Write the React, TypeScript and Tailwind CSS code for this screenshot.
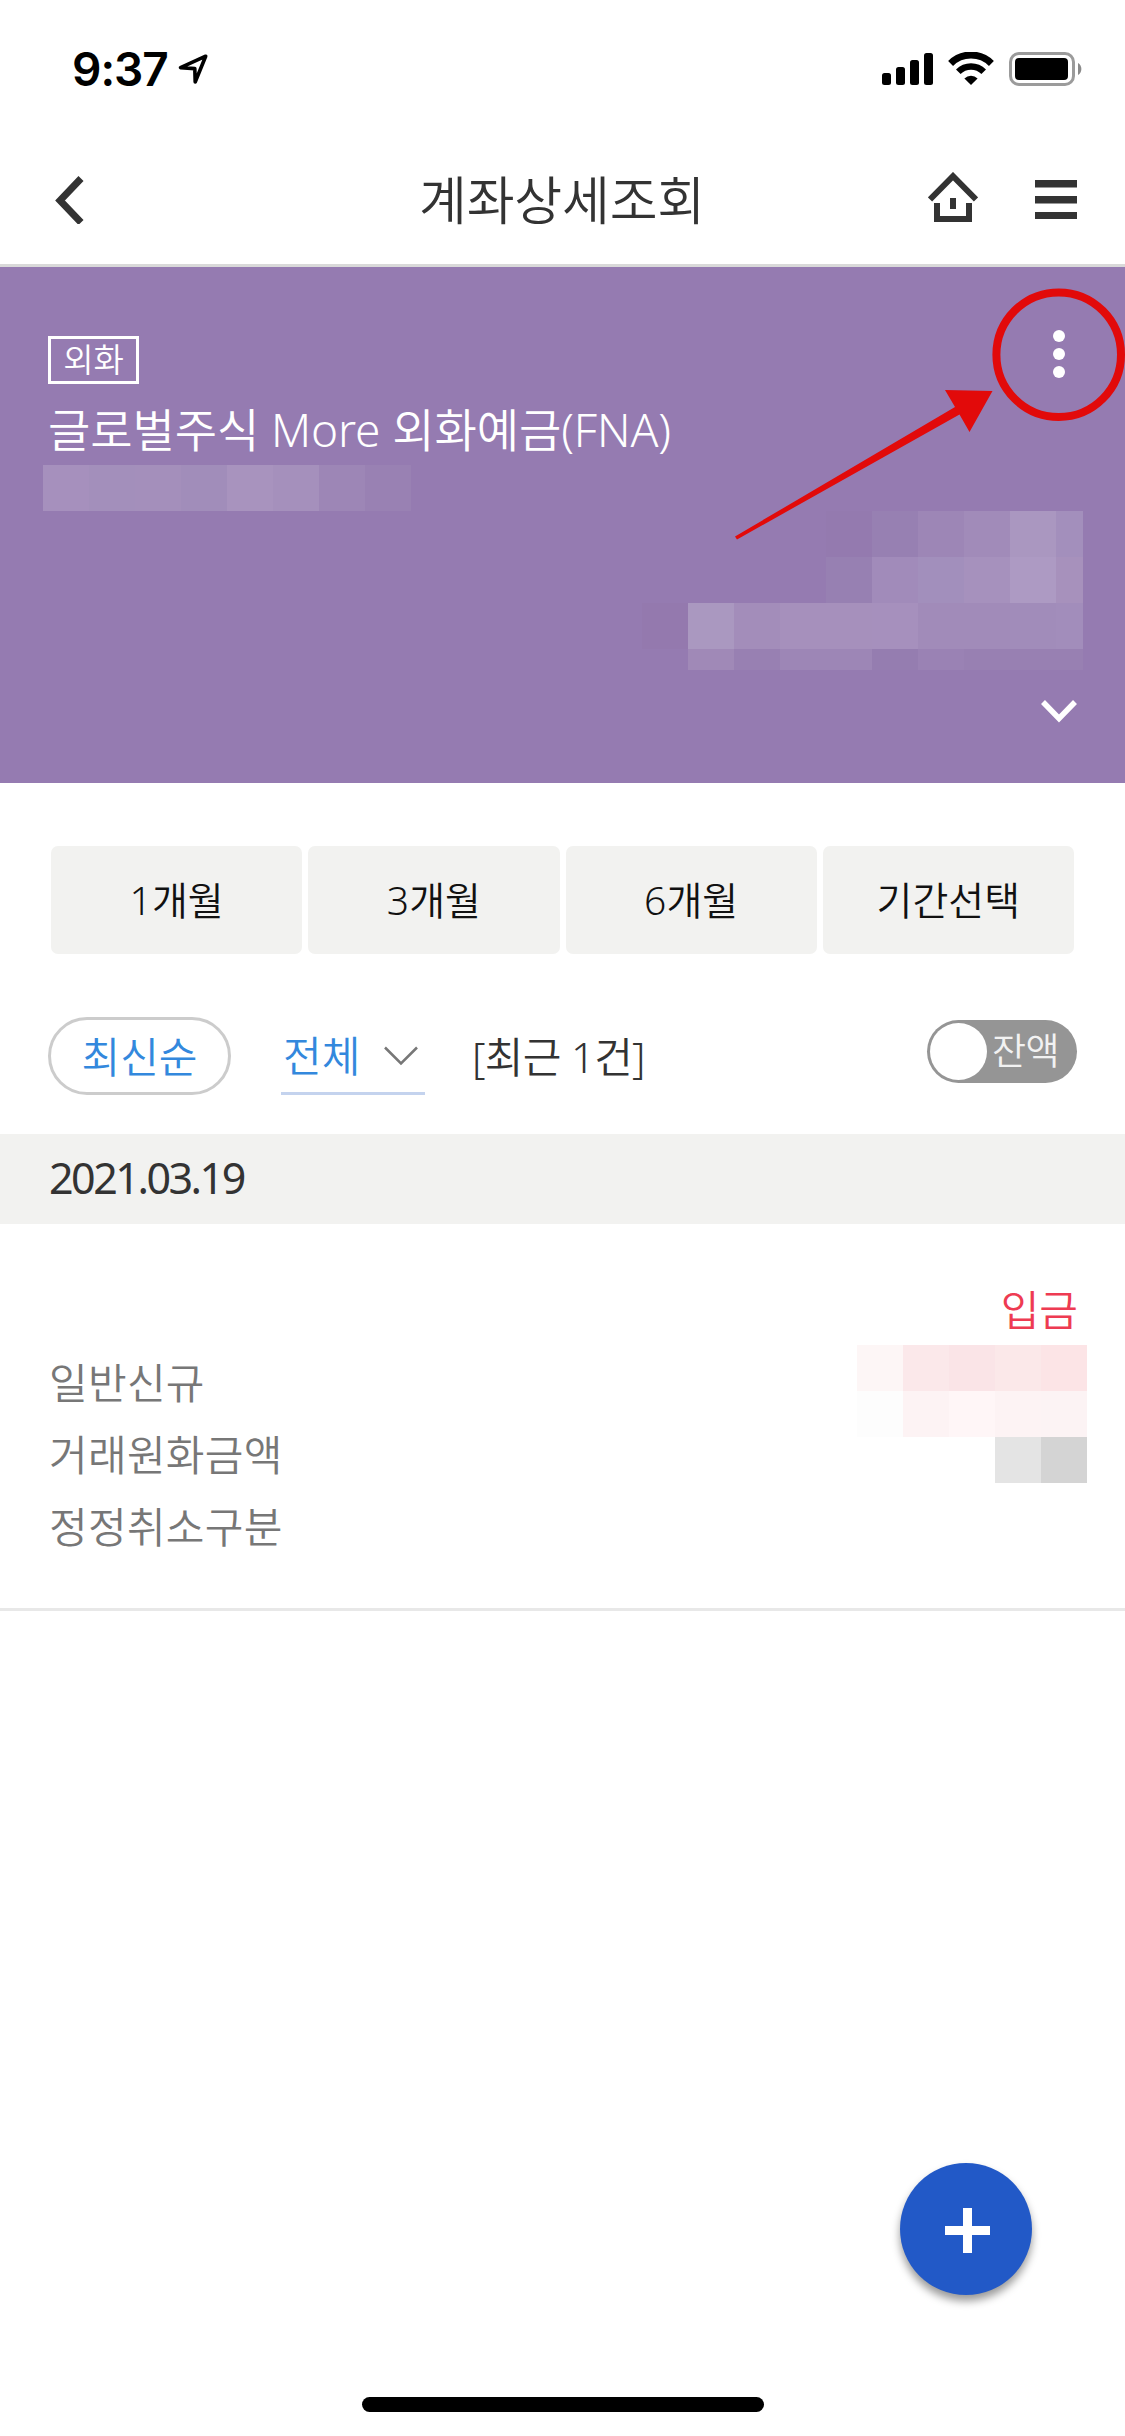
import clsx from "clsx";

const PERIODS = ["1개월", "3개월", "6개월", "기간선택"];

const DETAILS = ["일반신규", "거래원화금액", "정정취소구분"];

// masked account number
const ACCOUNT_MASK = [
  ["bg-[#a690bd]", "bg-[#a38fbb]", "bg-[#a48fbb]", "bg-[#a18dba]", "bg-[#a893be]", "bg-[#a590bc]", "bg-[#9d86b6]", "bg-[#9981b3]"],
];

// masked balance, 10 columns, the last one is cut off
const BALANCE_MASK = [
  ["", "", "", "", "bg-[#947aaf]", "bg-[#9780b2]", "bg-[#9d86b6]", "bg-[#a18bb9]", "bg-[#aa97c0]", "bg-[#a38fbc]"],
  ["", "", "", "", "bg-[#9780b2]", "bg-[#a18bba]", "bg-[#a28fbc]", "bg-[#a691bd]", "bg-[#ad9ac3]", "bg-[#a791bc]"],
  ["bg-[#9479ae]", "bg-[#aa98c0]", "bg-[#a38dba]", "bg-[#a690bc]", "bg-[#a690bc]", "bg-[#a690bd]", "bg-[#a18bb9]", "bg-[#a18bb9]", "bg-[#a18cba]", "bg-[#a28dbb]"],
  ["", "bg-[#a089b7]", "bg-[#9880b2]", "bg-[#9d86b6]", "bg-[#9d86b6]", "bg-[#957db0]", "bg-[#9a82b4]", "bg-[#9880b2]", "bg-[#9880b2]", "bg-[#9880b2]"],
];

const AMOUNT_MASK = [
  ["bg-[#fdf6f6]", "bg-[#fbe8ea]", "bg-[#fae4e7]", "bg-[#fbe8e9]", "bg-[#fce4e6]"],
  ["bg-[#fdfdfd]", "bg-[#fdf3f4]", "bg-[#fff6f7]", "bg-[#fdf3f4]", "bg-[#fcf3f4]"],
  ["", "", "", "bg-[#e4e4e4]", "bg-[#d4d4d4]"],
];

function Mosaic({ rows, className }: { rows: string[][]; className: string }) {
  return (
    <div className={clsx("grid overflow-hidden", className)}>
      {rows.flat().map((color, index) => (
        <span key={index} className={color} />
      ))}
    </div>
  );
}

function StatusBar() {
  return (
    <div className="flex h-[138px] items-start justify-between pl-[72px] pr-[42px] pt-[42px]">
      <div className="flex items-center">
        <span className="font-['Inter'] text-[46px] font-semibold leading-[54px] tracking-[-1px] text-black">9:37</span>
        <svg width="31" height="31" viewBox="0 0 31 31" className="ml-[10px]" fill="none" stroke="black" strokeWidth="3.6" strokeLinejoin="round">
          <path d="M27.7 2.2 L2.5 13.6 L16.8 14.6 L17.2 28 Z" />
        </svg>
      </div>
      <div className="flex items-start pt-[10px]">
        <svg width="51" height="34" viewBox="0 0 51 34">
          <rect x="0" y="21" width="9" height="12" rx="2.5" />
          <rect x="14" y="15" width="9" height="18" rx="2.5" />
          <rect x="28" y="8" width="9" height="25" rx="2.5" />
          <rect x="42" y="1" width="9" height="32" rx="2.5" />
        </svg>
        <svg width="46" height="34" viewBox="0 0 46 34" className="ml-[15px]" fill="none" stroke="black">
          <path d="M2.6 11.4 A29 29 0 0 1 43.4 11.4" strokeWidth="7" />
          <path d="M10.3 19.8 A18 18 0 0 1 35.7 19.8" strokeWidth="6.5" />
          <path d="M23 33 L16.4 26.4 A9.5 9.5 0 0 1 29.6 26.4 Z" fill="black" stroke="none" />
        </svg>
        <svg width="74" height="34" viewBox="0 0 74 34" className="ml-[15px]">
          <rect x="1.5" y="1.5" width="63" height="31" rx="8.5" fill="none" stroke="#9b9b9b" strokeWidth="3" />
          <rect x="6" y="6" width="53" height="22" rx="4" />
          <path d="M69 11 A7 7 0 0 1 69 23 Z" fill="#8a8a8a" />
        </svg>
      </div>
    </div>
  );
}

function Header() {
  return (
    <header className="flex h-[129px] items-center justify-between border-b-[3px] border-[#d9d9d9] pb-[4px] pl-[55px] pr-[48px]">
      <svg width="141" height="48" viewBox="0 0 141 48" className="mt-[1px]" fill="none" stroke="#333" strokeWidth="7">
        <path d="M26 2.5 L5 24.5 L26 46.5" />
      </svg>
      <h1 className="mt-[1px] text-[52px] leading-[76px] tracking-[-0.2px] text-[#333]">계좌상세조회</h1>
      <div className="flex items-center gap-[57px]">
        <svg width="50" height="50" viewBox="0 0 50 50" className="-mt-[5px]" fill="none" stroke="#333" strokeWidth="6">
          <path d="M2 27.5 L25 4.2 L48 27.5" />
          <path d="M9 31 V47 H41 V31" />
          <path d="M25 26 V37" />
        </svg>
        <svg width="42" height="42" viewBox="0 0 42 42" fill="#333">
          <rect y="2" width="42" height="7.5" />
          <rect y="18" width="42" height="7.5" />
          <rect y="34" width="42" height="7" />
        </svg>
      </div>
    </header>
  );
}

function AccountPanel() {
  return (
    <section className="relative h-[516px] bg-[#957bb1] pt-[69px] text-white">
      <div className="ml-[48px] flex h-12 w-[91px] items-center justify-center border-[3px] border-white pb-[1px] text-[33px] leading-none">
        외화
      </div>
      <h2 className="ml-[48px] mt-[11px] h-[70px] text-[46px] leading-[69px] tracking-[-0.1px]">글로벌주식 More 외화예금(FNA)</h2>
      <Mosaic rows={ACCOUNT_MASK} className="ml-[43px] h-[46px] w-[368px] grid-cols-8" />
      <Mosaic
        rows={BALANCE_MASK}
        className="ml-[642px] h-[159px] w-[441px] grid-cols-[repeat(9,46px)_27px] grid-rows-[46px_46px_46px_21px]"
      />
      <svg width="36" height="24" viewBox="0 0 36 24" className="ml-[1041px] mt-[29px]" fill="none" stroke="white" strokeWidth="5.5">
        <path d="M2 3 L18 19.5 L34 3" />
      </svg>
      {/* hint drawn over the panel: more menu, circle and arrow */}
      <svg width="405" height="270" viewBox="720 280 405 270" className="absolute left-[720px] top-[13px]">
        <g fill="white">
          <circle cx="1059" cy="336" r="6" />
          <circle cx="1059" cy="354" r="6" />
          <circle cx="1059" cy="372" r="6" />
        </g>
        <circle cx="1058.7" cy="354.7" r="62.3" fill="none" stroke="#e20a0a" strokeWidth="8" />
        <path d="M735 536.5 L955 407 L945 390 L992.5 391 L969.5 432 L959.5 414.5 L737 539.5 Z" fill="#e20a0a" />
      </svg>
    </section>
  );
}

function Filters() {
  return (
    <>
      <div className="mt-[63px] grid h-[108px] grid-cols-4 gap-[6px] px-[51px]">
        {PERIODS.map((period) => (
          <button key={period} type="button" className="rounded-[7px] bg-[#f2f2f0] pb-[1px] text-[39px] leading-none text-[#111]">
            {period}
          </button>
        ))}
      </div>
      <div className="mt-[63px] flex h-[117px] items-start pl-[48px] pr-[48px] text-[42px] leading-[74px]">
        <button type="button" className="h-[78px] w-[183px] rounded-full border-[3px] border-[#ccc] text-[#38d]">
          최신순
        </button>
        <button type="button" className="ml-[50px] flex h-[78px] w-[144px] items-center justify-between border-b-[3px] border-[#c4d3ee] pl-[2px] pr-[7px] pt-[3px] text-[#38d]">
          전체
          <svg width="34" height="20" viewBox="0 0 34 20" fill="none" stroke="#777" strokeWidth="2.5">
            <path d="M1 1.5 L17 17.5 L33 1.5" />
          </svg>
        </button>
        <span className="ml-[47px] pt-[3px] tracking-[-0.7px] text-[#333]">[최근 1건]</span>
        <span className="ml-auto mt-[3px] flex h-[63px] w-[150px] items-center rounded-full bg-[#959595] p-[3px]">
          <span className="size-[57px] shrink-0 rounded-full bg-white" />
          <span className="mb-[2px] ml-[5px] text-[37px] leading-none tracking-[-0.5px] text-[#f2f2f2]">잔액</span>
        </span>
      </div>
    </>
  );
}

function Transactions() {
  return (
    <section>
      <div className="h-[90px] bg-[#f2f2f0] pl-[49px] text-[43px] font-normal leading-[88px] tracking-[-2.5px] text-[#333]">2021.03.19</div>
      <div className="flex h-[387px] justify-between border-b-[3px] border-[#e8e8e8] text-[42px] leading-[72px]">
        <ul className="pl-[49px] pt-[123px] tracking-[0.3px] text-[#777]">
          {DETAILS.map((label) => (
            <li key={label}>{label}</li>
          ))}
        </ul>
        <div className="flex flex-col items-end pr-[38px] pt-[50px]">
          <span className="mr-[9px] h-[71px] text-[#ee3b52]">입금</span>
          <Mosaic rows={AMOUNT_MASK} className="h-[138px] w-[230px] grid-cols-5" />
        </div>
      </div>
    </section>
  );
}

export default function App() {
  return (
    <main className="relative flex h-[2436px] w-[1125px] flex-col overflow-hidden bg-white font-['Noto_Sans','Noto_Sans_CJK_KR',sans-serif] font-[350]">
      <StatusBar />
      <Header />
      <AccountPanel />
      <Filters />
      <Transactions />
      <button
        type="button"
        className="absolute left-[900px] top-[2163px] flex size-[132px] items-center justify-center rounded-full bg-[#2259c7] shadow-[0_6px_9px_rgba(0,0,0,0.4)]"
      >
        <svg width="45" height="45" viewBox="0 0 45 45" fill="white" className="ml-[3px] mt-[3px]">
          <path d="M18 0 H27 V18 H45 V27 H27 V45 H18 V27 H0 V18 H18 Z" />
        </svg>
      </button>
      <div className="mx-auto mb-[24px] mt-auto h-[15px] w-[402px] rounded-full bg-black" />
    </main>
  );
}
